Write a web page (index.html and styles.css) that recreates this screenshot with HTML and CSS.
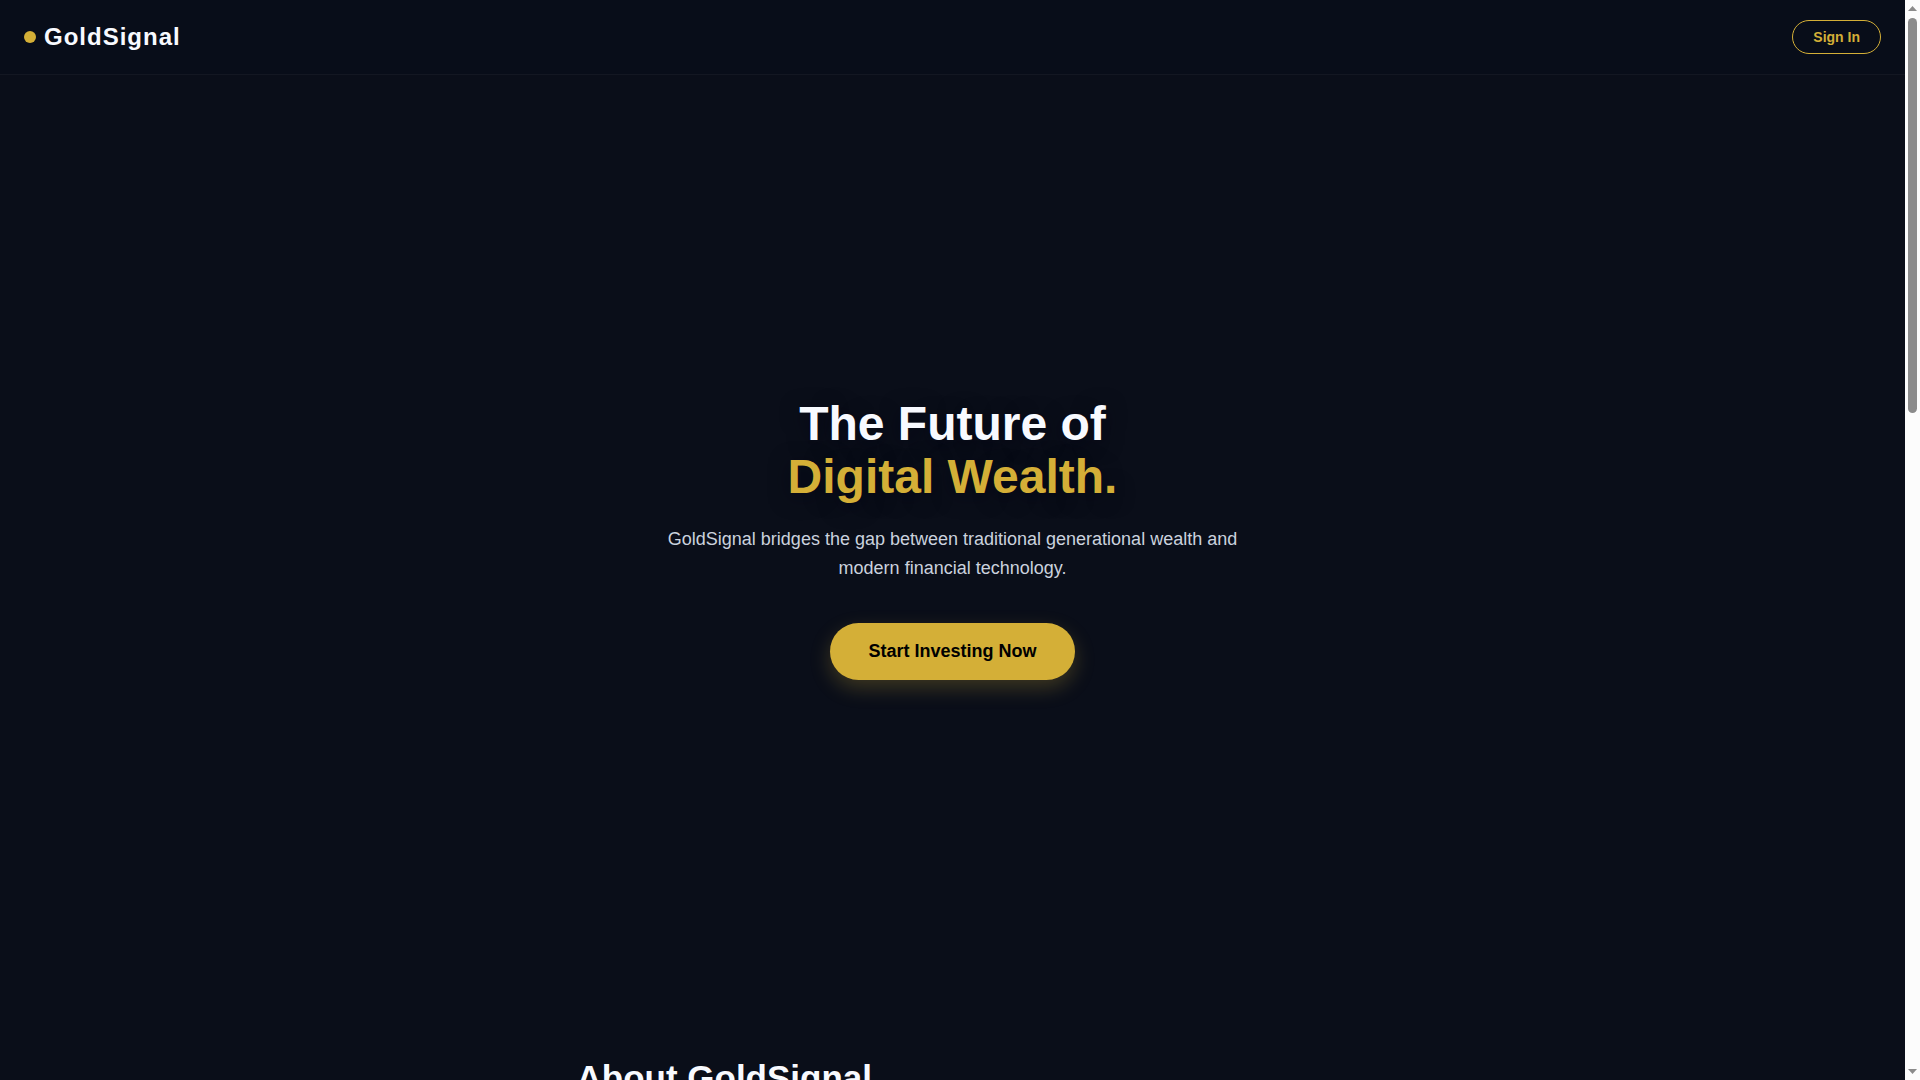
FILE: index.html
```html
<!DOCTYPE html>
<html lang="en">
<head>
<meta charset="utf-8">
<meta name="viewport" content="width=device-width, initial-scale=1">
<title>GoldSignal</title>
<link rel="stylesheet" href="styles.css">
</head>
<body>
<div class="viewport">
  <div class="page">
    <header class="nav">
      <a class="brand" href="#top"><span class="brand-dot"></span>GoldSignal</a>
      <button class="sign-in" type="button">Sign In</button>
    </header>
    <main id="top">
      <section class="hero">
        <h1 class="hero-title">The Future of<br><span class="gold">Digital Wealth.</span></h1>
        <p class="hero-text">GoldSignal bridges the gap between traditional generational wealth and modern financial technology.</p>
        <button class="cta" type="button">Start Investing Now</button>
      </section>
      <section class="about">
        <h2 class="about-title">About GoldSignal</h2>
      </section>
    </main>
  </div>
  <div class="scrollbar" aria-hidden="true">
    <svg class="arrow" viewBox="0 0 9 5"><path d="M4.5 0 9 5H0Z"/></svg>
    <div class="track"><div class="thumb"></div></div>
    <svg class="arrow" viewBox="0 0 9 5"><path d="M0 0H9L4.5 5Z"/></svg>
  </div>
</div>
</body>
</html>
```
FILE: styles.css
```css
* {
  box-sizing: border-box;
}

body {
  margin: 0;
  background: #0a0e19;
  color: #f8faff;
  font-family: "Liberation Sans", Arial, sans-serif;
}

.viewport {
  display: grid;
  grid-template-columns: minmax(0, 1fr) 15px;
  height: 100vh;
  overflow: hidden;
}

.page {
  overflow: hidden;
}

.nav {
  display: flex;
  align-items: center;
  justify-content: space-between;
  padding: 20px 24px;
  background: #080d19;
  border-bottom: 1px solid #131722;
}

.brand {
  display: flex;
  align-items: center;
  gap: 8px;
  color: #f8faff;
  font-size: 24px;
  font-weight: 700;
  line-height: 28px;
  letter-spacing: 1px;
  text-decoration: none;
}

.brand-dot {
  width: 12px;
  height: 12px;
  border-radius: 50%;
  background: #d4af37;
}

.sign-in {
  padding: 8px 20px;
  border: 1px solid #d4af37;
  border-radius: 20px;
  background: transparent;
  color: #d4af37;
  font: 700 14px/16px "Liberation Sans", Arial, sans-serif;
}

.hero {
  display: flex;
  flex-direction: column;
  align-items: center;
  justify-content: center;
  min-height: calc(100vh - 153px);
  padding: 0 24px;
  text-align: center;
}

.hero-title {
  margin: 0 0 22px;
  font-size: 48px;
  line-height: 53px;
  text-shadow: 0 4px 20px rgba(0, 5, 20, 0.6);
}

.gold {
  color: #d4af37;
}

.hero-text {
  max-width: 600px;
  margin: 0 0 40px;
  color: #cbd2de;
  font-size: 18px;
  line-height: 29px;
}

.cta {
  padding: 18px 38px;
  border: 0;
  border-radius: 30px;
  background: #d4af37;
  color: #000;
  font: 700 18px/21px "Liberation Sans", Arial, sans-serif;
  box-shadow: 0 8px 20px rgba(212, 175, 55, 0.25);
}

.about {
  max-width: 800px;
  margin: 0 auto;
  padding: 56px 24px;
}

.about-title {
  margin: 0;
  font-size: 35px;
  line-height: 40px;
}

.scrollbar {
  display: flex;
  flex-direction: column;
  align-items: center;
  gap: 7px;
  padding: 6px 0;
  background: #fcfcfc;
}

.arrow {
  width: 9px;
  height: 5px;
  fill: #8b8b8b;
}

.track {
  flex: 1;
}

.thumb {
  width: 9px;
  height: 37.8%;
  border-radius: 5px;
  background: #8b8b8b;
}
```
